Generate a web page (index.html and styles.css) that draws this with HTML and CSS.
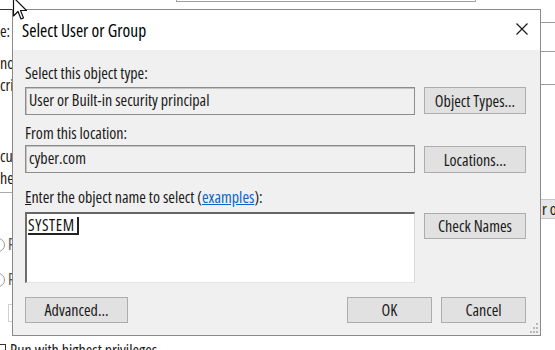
FILE: index.html
```html
<!DOCTYPE html>
<html>
<head>
  <title>Select User or Group</title>
  <link rel="stylesheet" href="styles.css">
</head>
<body>

  <!-- Task window behind the dialog, only its edges show -->
  <div class="back-top"></div>
  <div class="back-left">
    <div class="frag f1">e:</div>
    <div class="frag f2">no</div>
    <div class="frag f3">cri</div>
    <div class="frag f4">cu</div>
    <div class="frag f5">he</div>
    <div class="back-rule"></div>
    <div class="radio-row r1"><span class="radio"></span>R</div>
    <div class="radio-row r2"><span class="radio"></span>R</div>
    <div class="back-btn"></div>
  </div>
  <div class="back-check"><span class="box"></span>Run with highest privileges</div>
  <div class="back-right">
    <div class="tick t1"></div>
    <div class="tick t2"></div>
    <div class="tick t3"></div>
    <div class="back-pill">r or</div>
  </div>

  <!-- The dialog itself -->
  <div class="dialog">
    <div class="titlebar">
      <span class="title">Select User or Group</span>
      <svg class="close" width="12" height="12" viewBox="0 0 12 12">
        <path d="M0.5 0.5 L11.5 11.5 M11.5 0.5 L0.5 11.5" stroke="#1a1a1a" stroke-width="1.2" fill="none"/>
      </svg>
    </div>

    <div class="content">
      <div class="label l1">Select this object type:</div>
      <div class="row row1">
        <div class="field">User or Built-in security principal</div>
        <button class="btn">Object Types...</button>
      </div>

      <div class="label l2">From this location:</div>
      <div class="row row2">
        <div class="field">cyber.com</div>
        <button class="btn">Locations...</button>
      </div>

      <div class="label l3"><u>E</u>nter the object name to select (<a href="#">examples</a>):</div>
      <div class="row row3">
        <div class="names"><span class="entry">SYSTEM</span></div>
        <button class="btn">Check Names</button>
      </div>

      <div class="footer">
        <button class="btn wide">Advanced...</button>
        <div class="footer-right">
          <button class="btn small">OK</button>
          <button class="btn small">Cancel</button>
        </div>
      </div>
    </div>

    <!-- resize grip -->
    <svg class="grip" width="9" height="11" viewBox="0 0 9 11">
      <rect x="7" y="1" width="2" height="2" fill="#b8b8b8"/>
      <rect x="7" y="5" width="2" height="2" fill="#b8b8b8"/>
      <rect x="4" y="5" width="2" height="2" fill="#b8b8b8"/>
      <rect x="7" y="9" width="2" height="2" fill="#b8b8b8"/>
      <rect x="4" y="9" width="2" height="2" fill="#b8b8b8"/>
      <rect x="1" y="9" width="2" height="2" fill="#b8b8b8"/>
    </svg>
  </div>

  <!-- mouse pointer -->
  <svg class="cursor" width="16" height="26" viewBox="0 0 16 26">
    <path d="M1.5 0.5 L1.5 19 L6 14.5 L9 22 L11.5 21 L8.5 13.5 L14.5 13.5 Z" fill="#fff" stroke="#111" stroke-width="1.2" stroke-linejoin="round"/>
  </svg>

</body>
</html>
```

FILE: styles.css
```css
/* Page base */
body {
  margin: 0;
  width: 555px;
  height: 350px;
  overflow: hidden;
  position: relative;
  background: #fff;
  font-family: "Open Sans", "Liberation Sans", sans-serif;
  font-stretch: 75%;
  font-size: 16px;
  color: #1a1a1a;
}

/* ---------- background window ---------- */
.back-top {
  position: absolute;
  left: 176px;
  top: -10px;
  width: 298px;
  height: 10px;
  border: 1px solid #a0a0a0;
}

.back-left {
  position: absolute;
  left: 0;
  top: 0;
  width: 13px;
  height: 340px;
  overflow: hidden;
  border-top: 1px solid #333;
  margin-top: 9px;
}

.frag {
  position: absolute;
  left: 0;
  line-height: 14px;
  white-space: nowrap;
}
.f1 { top: 14px; }
.f2 { top: 46px; }
.f3 { top: 68px; }
.f4 { top: 139px; }
.f5 { top: 161px; }

.back-rule {
  position: absolute;
  left: 0;
  top: 182px;
  width: 13px;
  border-top: 1px solid #aaa;
}

.radio-row {
  position: absolute;
  left: -9px;
  display: flex;
  align-items: center;
  gap: 3px;
  color: #555;
  line-height: 15px;
}
.r1 { top: 227px; }
.r2 { top: 262px; }

.radio {
  width: 12px;
  height: 12px;
  border: 1px solid #999;
  border-radius: 50%;
}

.back-btn {
  position: absolute;
  left: 8px;
  top: 294px;
  width: 20px;
  height: 16px;
  border: 1px solid #d0d0d0;
}

.back-check {
  position: absolute;
  left: -6px;
  top: 341px;
  display: flex;
  align-items: center;
  gap: 4px;
  line-height: 18px;
  white-space: nowrap;
}

.back-check .box {
  width: 10px;
  height: 10px;
  border: 1px solid #333;
}

.back-right {
  position: absolute;
  left: 541px;
  top: 0;
  width: 14px;
  height: 350px;
  overflow: hidden;
}

.tick {
  position: absolute;
  left: 0;
  width: 14px;
  border-top: 1px solid #9a9a9a;
}
.t1 { top: 22px; }
.t2 { top: 51px; }
.t3 { top: 84px; }

.back-pill {
  position: absolute;
  left: -4px;
  top: 199px;
  height: 18px;
  padding: 0 4px;
  background: #e6e6e6;
  border: 1px solid #c4c4c4;
  line-height: 18px;
  white-space: nowrap;
}

/* ---------- dialog ---------- */
.dialog {
  position: absolute;
  left: 12px;
  top: 9px;
  width: 529px;
  height: 327px;
  box-sizing: border-box;
  border: 1px solid #8a8a8a;
  background: #f0f0f0;
}

.titlebar {
  height: 40px;
  background: #fff;
  display: flex;
  align-items: center;
  justify-content: space-between;
  padding: 0 12px 0 9px;
}

.title {
  font-size: 17.5px;
  color: #000;
}

.close {
  margin-top: -2px;
}

.content {
  padding: 14px 14px 0 12px;
}

.label {
  line-height: 18px;
  height: 18px;
  white-space: nowrap;
}

.label a {
  color: #0a64c8;
}

.l2 { margin-top: 9px; }
.l3 { margin-top: 15px; }

.row {
  display: grid;
  grid-template-columns: 390px 102px;
  column-gap: 9px;
  align-items: start;
}

.row1 { margin-top: 5px; }
.row2 { margin-top: 3px; }
.row3 { margin-top: 6px; }

.field {
  height: 28px;
  box-sizing: border-box;
  border: 1px solid #8c8c8c;
  box-shadow: inset 1px 1px 0 #c4c4c4;
  padding-left: 3px;
  line-height: 25px;
  white-space: nowrap;
}

.row2 .btn { margin-top: 1px; }
.row3 .btn { margin-top: 1px; height: 26px; }

.btn {
  height: 27px;
  box-sizing: border-box;
  background: #e1e1e1;
  border: 1px solid #adadad;
  font: inherit;
  color: #1a1a1a;
  padding: 0;
}

.names {
  height: 71px;
  box-sizing: border-box;
  background: #fff;
  border-top: 2px solid #666;
  border-left: 2px solid #6e6e6e;
  border-right: 1px solid #dadada;
  border-bottom: 1px solid #e4e4e4;
  padding: 0 0 0 1px;
}

.entry {
  display: inline-block;
  height: 16px;
  line-height: 16px;
  padding-right: 2px;
  letter-spacing: 0.6px;
  border-bottom: 2px solid #222;
  border-right: 2px solid #222;
  color: #111;
}

.footer {
  margin-top: 14px;
  display: flex;
  justify-content: space-between;
}

.footer .btn { height: 26px; }
.wide { width: 103px; }
.small { width: 85px; }

.footer-right {
  display: flex;
  gap: 9px;
}

.grip {
  position: absolute;
  right: 2px;
  bottom: 2px;
}

.cursor {
  position: absolute;
  left: 12px;
  top: -3px;
}
```
